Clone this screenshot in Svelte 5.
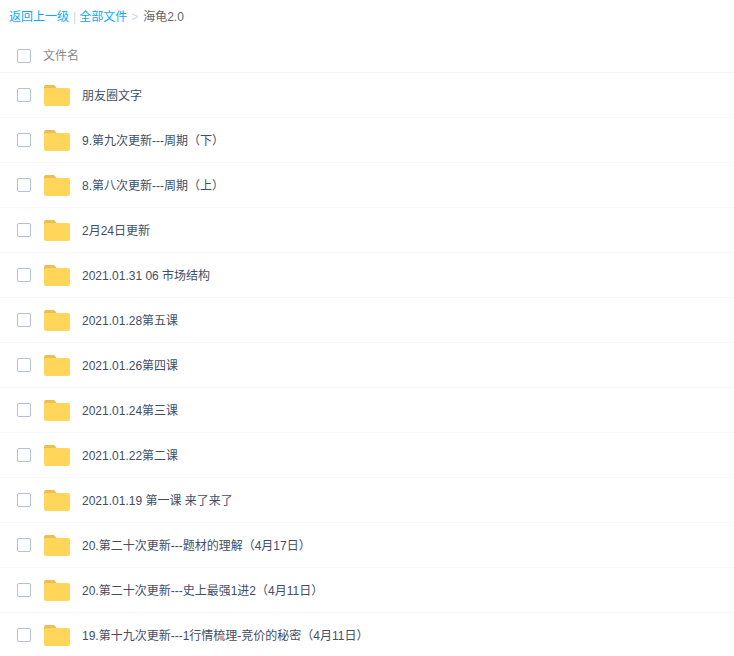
<script>
    const folders = [
        '朋友圈文字',
        '9.第九次更新---周期（下）',
        '8.第八次更新---周期（上）',
        '2月24日更新',
        '2021.01.31 06 市场结构',
        '2021.01.28第五课',
        '2021.01.26第四课',
        '2021.01.24第三课',
        '2021.01.22第二课',
        '2021.01.19 第一课 来了来了',
        '20.第二十次更新---题材的理解（4月17日）',
        '20.第二十次更新---史上最强1进2（4月11日）',
        '19.第十九次更新---1行情梳理-竞价的秘密（4月11日）'
    ]
</script>

<div class="page">
    <div class="crumbs">
        <a href="#back">返回上一级</a>
        <span class="bar">|</span>
        <a href="#all">全部文件</a>
        <span class="sep">&gt;</span>
        <span class="current">海龟2.0</span>
    </div>

    <div class="head">
        <span class="check"></span>
        <span class="head-name">文件名</span>
    </div>

    {#each folders as name}
        <div class="row">
            <span class="check"></span>
            <svg class="folder" width="26" height="22" viewBox="0 0 26 22">
                <path d="M0 3A2 2 0 0 1 2 1h7.500a2 2 0 0 1 1.600.8L13 5H0z" fill="#edbe54" />
                <rect x="0" y="4" width="26" height="18" rx="2" fill="#ffd659" />
            </svg>
            <span class="name">{name}</span>
        </div>
    {/each}
</div>

<style>
    :global(body) {
        background: #fff;
    }
    .page {
        width: 734px;
        height: 656px;
        overflow: hidden;
        font-family: "Liberation Sans", "Noto Sans CJK SC", sans-serif;
        font-size: 12px;
    }
    .crumbs {
        height: 33px;
        padding: 2px 0 0 9px;
        box-sizing: border-box;
        display: flex;
        align-items: center;
        gap: 4px;
        line-height: 33px;
    }
    .crumbs a {
        color: #09aaff;
        text-decoration: none;
    }
    .bar {
        color: #c5d8f3;
        margin-right: -1px;
    }
    .sep {
        color: #c5d8f3;
        margin-right: 1px;
    }
    .current {
        color: #666;
    }
    .head {
        height: 40px;
        padding: 6px 0 0 17px;
        display: flex;
        align-items: center;
        border-bottom: 1px solid #f4f5f7;
        box-sizing: border-box;
    }
    .head-name {
        margin: 0 0 2px 12px;
        color: #888;
    }
    .row {
        height: 45px;
        padding-left: 17px;
        display: flex;
        align-items: center;
        border-bottom: 1px solid #f4f7fb;
        box-sizing: border-box;
    }
    .check {
        width: 14px;
        height: 14px;
        border: 1px solid #b4c0d3;
        border-radius: 2px;
        box-sizing: border-box;
        flex: none;
    }
    .folder {
        margin-left: 13px;
        flex: none;
    }
    .name {
        margin: 0 0 2px 12px;
        color: #424e67;
    }
</style>
